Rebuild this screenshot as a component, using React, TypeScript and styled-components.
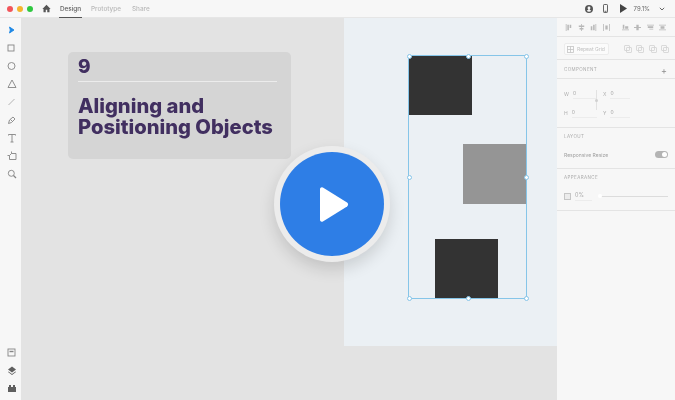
import React from 'react';
import styled, { createGlobalStyle } from 'styled-components';

const GlobalStyle = createGlobalStyle`
  html, body {
    margin: 0;
    padding: 0;
    background: #e3e3e3;
    font-family: Inter, "Liberation Sans", sans-serif;
    overflow: hidden;
  }
`;

const Window = styled.div`
  width: 675px;
  height: 400px;
  display: flex;
  flex-direction: column;
  overflow: hidden;
  will-change: transform;
`;

const TitleBar = styled.header`
  height: 18px;
  flex: none;
  display: flex;
  align-items: center;
  background: #f7f7f7;
  border-bottom: 1px solid #e6e6e6;
  box-sizing: border-box;
  padding: 0 0 0 7px;
`;

const Light = styled.span<{ $color: string }>`
  width: 6px;
  height: 6px;
  border-radius: 50%;
  background: ${(p) => p.$color};
  margin-right: 4px;
`;

const HomeIcon = styled.svg`
  width: 9px;
  height: 9px;
  margin: 0 8px 0 5px;
  fill: #555;
`;

const Tab = styled.span<{ $active?: boolean }>`
  height: 18px;
  box-sizing: border-box;
  display: flex;
  align-items: center;
  padding-top: 1px;
  margin-right: ${(p) => (p.$active ? '9px' : '11px')};
  font-size: 6.4px;
  font-weight: 500;
  color: ${(p) => (p.$active ? '#5f5f5f' : '#b9b9b9')};
  border-bottom: 1px solid ${(p) => (p.$active ? '#555' : 'transparent')};
  width: ${(p) => (p.$active ? '23px' : 'auto')};
  justify-content: center;
`;

const TitleRight = styled.div`
  margin-left: auto;
  display: flex;
  align-items: center;
  padding-right: 10px;
`;

const Zoom = styled.span`
  font-size: 6px;
  color: #666;
  margin: 0 9px 0 7px;
`;

const Body = styled.div`
  flex: 1;
  display: flex;
  min-height: 0;
`;

const ToolRail = styled.nav`
  width: 21px;
  flex: none;
  background: #f7f7f7;
  display: flex;
  flex-direction: column;
  align-items: center;
  padding: 3px 0;
  box-sizing: border-box;
`;

const Tool = styled.svg`
  width: 18px;
  height: 18px;
  fill: none;
  stroke: #858585;
  stroke-width: 0.9;
  flex: none;
`;

const RailSpacer = styled.div`
  flex: 1;
`;

const Canvas = styled.main`
  flex: 1;
  position: relative;
  background: #e3e3e3;
`;

const Artboard = styled.div`
  position: absolute;
  left: 323px;
  top: 0;
  width: 213px;
  height: 328px;
  background: #ebf0f4;
`;

const Shape = styled.div<{ $x: number; $y: number; $gray?: boolean }>`
  position: absolute;
  left: ${(p) => p.$x}px;
  top: ${(p) => p.$y}px;
  width: 63px;
  height: ${(p) => (p.$gray ? 60 : 59)}px;
  background: ${(p) => (p.$gray ? '#959595' : '#333333')};
`;

const Selection = styled.div`
  position: absolute;
  left: 64px;
  top: 37px;
  width: 117px;
  height: 242px;
  border: 1px solid #86c5e8;
`;

const Handle = styled.span<{ $x: number; $y: number }>`
  position: absolute;
  left: ${(p) => p.$x}%;
  top: ${(p) => p.$y}%;
  width: 3px;
  height: 3px;
  margin: -2px 0 0 -2px;
  border-radius: 50%;
  background: #fff;
  border: 1px solid #86c5e8;
`;

const LessonCard = styled.section`
  position: absolute;
  left: 47px;
  top: 34px;
  width: 223px;
  height: 107px;
  box-sizing: border-box;
  padding: 4px 14px 0 10px;
  background: #d5d5d5;
  border-radius: 5px;
  color: #412f60;
`;

const LessonNumber = styled.div`
  font-size: 19px;
  line-height: 22px;
  font-weight: 800;
  padding-bottom: 3px;
  border-bottom: 1.5px solid #ececec;
`;

const LessonTitle = styled.h1`
  margin: 13px 0 0;
  font-size: 20.2px;
  line-height: 21px;
  font-weight: 800;
  white-space: nowrap;
`;

const PlayRing = styled.div`
  position: absolute;
  left: 253px;
  top: 128px;
  width: 116px;
  height: 116px;
  box-sizing: border-box;
  padding: 6px;
  border-radius: 50%;
  background: #ececec;
  box-shadow: 0 7px 16px rgba(0, 0, 0, 0.14);
`;

const PlayDisc = styled.div`
  width: 104px;
  height: 104px;
  border-radius: 50%;
  background: #2e7ee6;
  display: flex;
  align-items: center;
  justify-content: center;
`;

const PlayGlyph = styled.svg`
  width: 29px;
  height: 37px;
  fill: #fff;
  margin-left: 5px;
`;

const Panel = styled.aside`
  width: 118px;
  flex: none;
  background: #f7f7f7;
  box-sizing: border-box;
  display: flex;
  flex-direction: column;
`;

const PanelSection = styled.div<{ $h: number }>`
  height: ${(p) => p.$h}px;
  flex: none;
  box-sizing: border-box;
  border-bottom: 1px solid #e4e4e4;
  padding: 0 7px;
`;

const AlignRow = styled(PanelSection)`
  display: flex;
  align-items: center;
  padding: 0 4px 0 8px;
`;

const AlignIcon = styled.svg`
  width: 7px;
  height: 7px;
  fill: #b8b8b8;
  margin-right: 5.5px;
  flex: none;
`;

const AlignDivider = styled.span`
  width: 1px;
  height: 18px;
  background: #e4e4e4;
  margin: 0 5px 0 1.5px;
`;

const RepeatRow = styled(PanelSection)`
  display: flex;
  align-items: center;
  padding: 2px 0 0 7px;
`;

const RepeatButton = styled.div`
  width: 45px;
  height: 12px;
  box-sizing: border-box;
  background: #fbfbfb;
  border: 1px solid #ececec;
  border-radius: 2px;
  display: flex;
  align-items: center;
  gap: 3px;
  padding-left: 2px;
  font-size: 5px;
  color: #c2c2c2;
  white-space: nowrap;
`;

const BoolGroup = styled.div`
  margin-left: auto;
  display: flex;
  gap: 4.5px;
  padding-right: 6px;
`;

const BoolIcon = styled.svg`
  width: 8px;
  height: 8px;
  fill: none;
  stroke: #d2d2d2;
  stroke-width: 0.8;
`;

const SectionLabel = styled.div`
  font-size: 4.5px;
  letter-spacing: 0.4px;
  color: #adadad;
  line-height: 6px;
`;

const HeaderRow = styled(PanelSection)`
  display: flex;
  align-items: center;
  justify-content: space-between;
  padding: 2px 8px 0 7px;
`;

const PlusSign = styled.span`
  font-size: 9px;
  color: #8d8d8d;
`;

const FieldGrid = styled(PanelSection)`
  position: relative;
  display: grid;
  grid-template-columns: 33px 27px;
  grid-template-rows: 19px 19px;
  column-gap: 6px;
  align-content: center;
  padding-left: 7px;
`;

const Field = styled.div`
  display: flex;
  align-items: center;
  gap: 4px;
  font-size: 5px;
  color: #b0b0b0;
`;

const FieldValue = styled.span`
  flex: 1;
  color: #a5a5a5;
  border-bottom: 1px solid #ececec;
  line-height: 9px;
`;

const Link = styled.span`
  position: absolute;
  left: 39px;
  top: 11px;
  width: 1px;
  height: 20px;
  background: #e2e2e2;
  &::after {
    content: '';
    position: absolute;
    left: -1px;
    top: 9px;
    width: 3px;
    height: 3px;
    border-radius: 50%;
    background: #d0d0d0;
  }
`;

const TextSection = styled(PanelSection)`
  padding: 6px 7px 0;
`;

const ResizeRow = styled.div`
  display: flex;
  align-items: center;
  justify-content: space-between;
  margin-top: 11px;
  font-size: 5px;
  color: #a0a0a0;
`;

const Toggle = styled.span`
  width: 13px;
  height: 7px;
  border-radius: 3.5px;
  background: #b4b4b4;
  display: flex;
  justify-content: flex-end;
  align-items: center;
  padding-right: 1px;
  box-sizing: border-box;
  &::after {
    content: '';
    width: 5px;
    height: 5px;
    border-radius: 50%;
    background: #fff;
  }
`;

const OpacityRow = styled.div`
  display: flex;
  align-items: center;
  margin-top: 10px;
  font-size: 5.5px;
  color: #a8a8a8;
`;

const Check = styled.span`
  width: 5px;
  height: 5px;
  border: 1px solid #c6c6c6;
  background: #ececec;
  margin-right: 4px;
  flex: none;
`;

const Percent = styled.span`
  width: 17px;
  border-bottom: 1px solid #ececec;
  line-height: 9px;
`;

const Track = styled.span`
  position: relative;
  margin-left: 8px;
  width: 68px;
  height: 1px;
  background: #dcdcdc;
  &::before {
    content: '';
    position: absolute;
    left: -2px;
    top: -1.5px;
    width: 4px;
    height: 4px;
    border-radius: 50%;
    background: #fff;
  }
`;

const handles: [number, number][] = [
  [0, 0], [50, 0], [100, 0],
  [0, 50], [100, 50],
  [0, 100], [50, 100], [100, 100],
];

const alignLeft = ['M1 0h1v9H1zM3 1h2v7H3zM6 1h2v4H6z', 'M4 0h1v9H4zM1 2h7v2H1zM2 5h5v2H2z', 'M7 0h1v9H7zM1 3h2v5H1zM4 1h2v7H4z', 'M0 0h1v9H0zM8 0h1v9H8zM3 2h3v5H3z'];
const alignRight = ['M0 7h9v1H0zM1 1h2v5H1zM4 3h4v3H4z', 'M0 4h9v1H0zM3 1h3v7H3z', 'M0 1h9v1H0zM1 3h7v2H1zM3 6h5v1H3z', 'M0 1h9v1H0zM0 7h9v1H0zM2 3h5v3H2z'];

export default function App() {
  return (
    <Window>
      <GlobalStyle />
      <TitleBar>
        <Light $color="#f2555a" />
        <Light $color="#f5b52e" />
        <Light $color="#2fc840" />
        <HomeIcon viewBox="0 0 24 24">
          <path d="M12 2 1 13h3v9h6v-7h4v7h6v-9h3z" />
        </HomeIcon>
        <Tab $active>Design</Tab>
        <Tab>Prototype</Tab>
        <Tab>Share</Tab>
        <TitleRight>
          <svg width="8" height="8" viewBox="0 0 8 8" fill="#555">
            <path d="M4 0a4 4 0 1 1 0 8 4 4 0 0 1 0-8zm0 1.500a1.400 1.400 0 0 0-1.400 1.500c0 .8.4 1.400.9 1.700-.9.2-1.500.6-1.800 1.100a3 3 0 0 0 4.600 0c-.3-.5-.9-.9-1.800-1.100.5-.3.900-.9.900-1.700A1.400 1.400 0 0 0 4 1.500z" />
          </svg>
          <svg width="5" height="9" viewBox="0 0 5 9" fill="none" stroke="#555" strokeWidth="0.9" style={{ marginLeft: 10 }}>
            <rect x="0.500" y="0.500" width="4" height="8" rx="0.700" />
            <path d="M1.500 7.300h2" />
          </svg>
          <svg width="7" height="9" viewBox="0 0 7 9" fill="#444" style={{ marginLeft: 12 }}>
            <path d="M0 0 7 4.500 0 9z" />
          </svg>
          <Zoom>79.1%</Zoom>
          <svg width="6" height="4" viewBox="0 0 6 4" fill="none" stroke="#666" strokeWidth="1">
            <path d="m.8.8 2.200 2.200L5.200.8" />
          </svg>
        </TitleRight>
      </TitleBar>
      <Body>
        <ToolRail>
          <Tool viewBox="0 0 18 18"><path d="M7.500 6 12 9 7.500 12 8.300 9z" fill="#1e88e5" stroke="#1e88e5" /></Tool>
          <Tool viewBox="0 0 18 18"><rect x="6" y="6" width="6" height="6" /></Tool>
          <Tool viewBox="0 0 18 18"><circle cx="9.500" cy="9" r="3.500" /></Tool>
          <Tool viewBox="0 0 18 18"><path d="M10 5 14 12.500H6z" /></Tool>
          <Tool viewBox="0 0 18 18"><path d="M6.500 12 12.500 6" stroke="#aaa" /></Tool>
          <Tool viewBox="0 0 18 18"><path d="M6.500 12.500 7.500 9 11 6 13 8 9.500 11.500zM8.500 8.500 10.500 10.500" /></Tool>
          <Tool viewBox="0 0 18 18"><path d="M6.500 6.500V5.500h7v1M10 5.500v7.500M8.500 13h3" /></Tool>
          <Tool viewBox="0 0 18 18"><path d="M9.500 6.500h4.500V12.500H7.500V8.500zM7.500 8.500H5.500M9.500 6.500V4.500" /></Tool>
          <Tool viewBox="0 0 18 18"><circle cx="9.300" cy="8.300" r="3" /><path d="m11.500 10.500 2.500 2.500" strokeWidth="1.300" /></Tool>
          <RailSpacer />
          <Tool viewBox="0 0 18 18"><rect x="6" y="6" width="7" height="7" /><path d="M7.500 8.500h4" strokeWidth="1.400" /></Tool>
          <Tool viewBox="0 0 18 18" style={{ fill: '#5f5f5f', stroke: 'none' }}><path d="M10 5.500 14 8.500 10 11.500 6 8.500zM6.500 10.500 10 13 13.500 10.500 14 11 10 14 6 11z" /></Tool>
          <Tool viewBox="0 0 18 18" style={{ fill: '#5f5f5f', stroke: 'none' }}><path d="M6 8h8v5H6zM7 6h2v2H7zM11 6h2v2h-2z" /></Tool>
        </ToolRail>
        <Canvas>
          <Artboard>
            <Shape $x={65} $y={38} />
            <Shape $x={119} $y={126} $gray />
            <Shape $x={91} $y={221} />
            <Selection>
              {handles.map(([x, y]) => (
                <Handle key={`${x}-${y}`} $x={x} $y={y} />
              ))}
            </Selection>
          </Artboard>
          <LessonCard>
            <LessonNumber>9</LessonNumber>
            <LessonTitle>
              Aligning and
              <br />
              Positioning Objects
            </LessonTitle>
          </LessonCard>
          <PlayRing>
            <PlayDisc>
              <PlayGlyph viewBox="0 0 30 38">
                <path d="M3 1.500 28 17a2.500 2.500 0 0 1 0 4L3 36.500A2 2 0 0 1 0 35V3A2 2 0 0 1 3 1.500z" />
              </PlayGlyph>
            </PlayDisc>
          </PlayRing>
        </Canvas>
        <Panel>
          <AlignRow $h={19}>
            {alignLeft.map((d) => (
              <AlignIcon key={d} viewBox="0 0 9 9"><path d={d} /></AlignIcon>
            ))}
            <AlignDivider />
            {alignRight.map((d) => (
              <AlignIcon key={d} viewBox="0 0 9 9"><path d={d} /></AlignIcon>
            ))}
          </AlignRow>
          <RepeatRow $h={23}>
            <RepeatButton>
              <svg width="7" height="7" viewBox="0 0 7 7" fill="none" stroke="#c4c4c4" strokeWidth="0.800">
                <rect x="0.500" y="0.500" width="6" height="6" />
                <path d="M0.500 3.500h6M3.500 0.500v6" />
              </svg>
              Repeat Grid
            </RepeatButton>
            <BoolGroup>
              {[0, 1, 2, 3].map((i) => (
                <BoolIcon key={i} viewBox="0 0 8 8">
                  <rect x="0.500" y="0.500" width="5" height="5" rx="0.500" />
                  <rect x="2.500" y="2.500" width="5" height="5" rx="0.500" />
                </BoolIcon>
              ))}
            </BoolGroup>
          </RepeatRow>
          <HeaderRow $h={19}>
            <SectionLabel>COMPONENT</SectionLabel>
            <PlusSign>+</PlusSign>
          </HeaderRow>
          <FieldGrid $h={49}>
            <Link />
            <Field>W<FieldValue>0</FieldValue></Field>
            <Field>X<FieldValue>0</FieldValue></Field>
            <Field>H<FieldValue>0</FieldValue></Field>
            <Field>Y<FieldValue>0</FieldValue></Field>
          </FieldGrid>
          <TextSection $h={41}>
            <SectionLabel>LAYOUT</SectionLabel>
            <ResizeRow>
              Responsive Resize
              <Toggle />
            </ResizeRow>
          </TextSection>
          <TextSection $h={42}>
            <SectionLabel>APPEARANCE</SectionLabel>
            <OpacityRow>
              <Check />
              <Percent>0%</Percent>
              <Track />
            </OpacityRow>
          </TextSection>
        </Panel>
      </Body>
    </Window>
  );
}
